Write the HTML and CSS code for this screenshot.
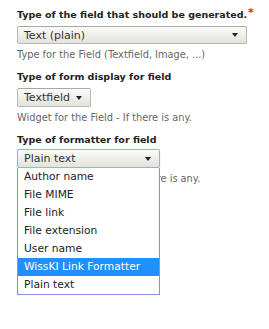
FILE: index.html
```html
<!DOCTYPE html>
<html>
  <head>
    <meta charset="utf-8">
    <title>Field settings</title>
    <link rel="stylesheet" href="styles.css">
  </head>
  <body>
    <div class="form">
      <div class="item">
        <div class="label">Type of the field that should be generated.<span class="req">*</span></div>
        <div class="select wide"><span>Text (plain)</span><i class="arrow"></i></div>
        <div class="desc">Type for the Field (Textfield, Image, ...)</div>
      </div>
      <div class="item">
        <div class="label">Type of form display for field</div>
        <div class="select small"><span>Textfield</span><i class="arrow"></i></div>
        <div class="desc">Widget for the Field - If there is any.</div>
      </div>
      <div class="item last">
        <div class="label">Type of formatter for field</div>
        <div class="dropdown">
          <div class="select focus"><span>Plain text</span><i class="arrow"></i></div>
          <ul class="options">
            <li>Author name</li>
            <li>File MIME</li>
            <li>File link</li>
            <li>File extension</li>
            <li>User name</li>
            <li class="hover">WissKI Link Formatter</li>
            <li>Plain text</li>
          </ul>
        </div>
        <div class="desc">Formatter of the field - If there is any.</div>
      </div>
    </div>
  </body>
</html>
```

FILE: styles.css
```css
* {
  box-sizing: border-box;
}
html, body {
  min-height: 100%;
  background-color: #fff;
}
body {
  margin: 0;
  min-height: 329px;
  font-family: 'DejaVu Sans', Verdana, sans-serif;
  color: #333;
}
.form {
  padding: 8px 0 0 17px;
}
.item {
  margin-bottom: 9px;
}
.item.last {
  margin-top: 4px;
}
.item.last .label {
  margin-bottom: 2px;
}
.label {
  font-size: 9.5px;
  font-weight: bold;
  line-height: 14px;
  color: #222;
  margin-bottom: 4px;
  white-space: nowrap;
}
.req {
  color: #e2231a;
  font-size: 11px;
  vertical-align: top;
  margin-left: 1px;
  line-height: 10px;
}
.select {
  display: flex;
  align-items: center;
  justify-content: space-between;
  height: 18px;
  padding: 0 8px 0 6px;
  border: 1px solid #b8b8b8;
  border-top-color: #a8a8a8;
  border-radius: 2px;
  background: linear-gradient(#fbfbf8, #e3e2db);
  font-size: 11px;
  color: #333;
}
.select.wide {
  width: 230px;
}
.select.small {
  width: 74px;
  height: 19px;
}
.select.focus {
  width: 143px;
  height: 19px;
  border-color: #8fb3e8;
  box-shadow: 0 0 1px #a9c6f0;
}
.arrow {
  width: 0;
  height: 0;
  border-left: 3.5px solid transparent;
  border-right: 3.5px solid transparent;
  border-top: 4px solid #222;
}
.desc {
  font-size: 9.8px;
  line-height: 13px;
  color: #666;
  margin-top: 4px;
  white-space: nowrap;
}
.dropdown {
  position: relative;
}
.options {
  position: absolute;
  left: 0;
  top: 19px;
  width: 143px;
  margin: 0;
  padding: 0;
  list-style: none;
  background: #fff;
  border: 1px solid #8197d6;
  border-top: 0;
  font-size: 10.7px;
  color: #222;
}
.options li {
  height: 18px;
  line-height: 18px;
  padding-left: 6px;
}
.options li.hover {
  background: #1e90ff;
  color: #fff;
}
```
